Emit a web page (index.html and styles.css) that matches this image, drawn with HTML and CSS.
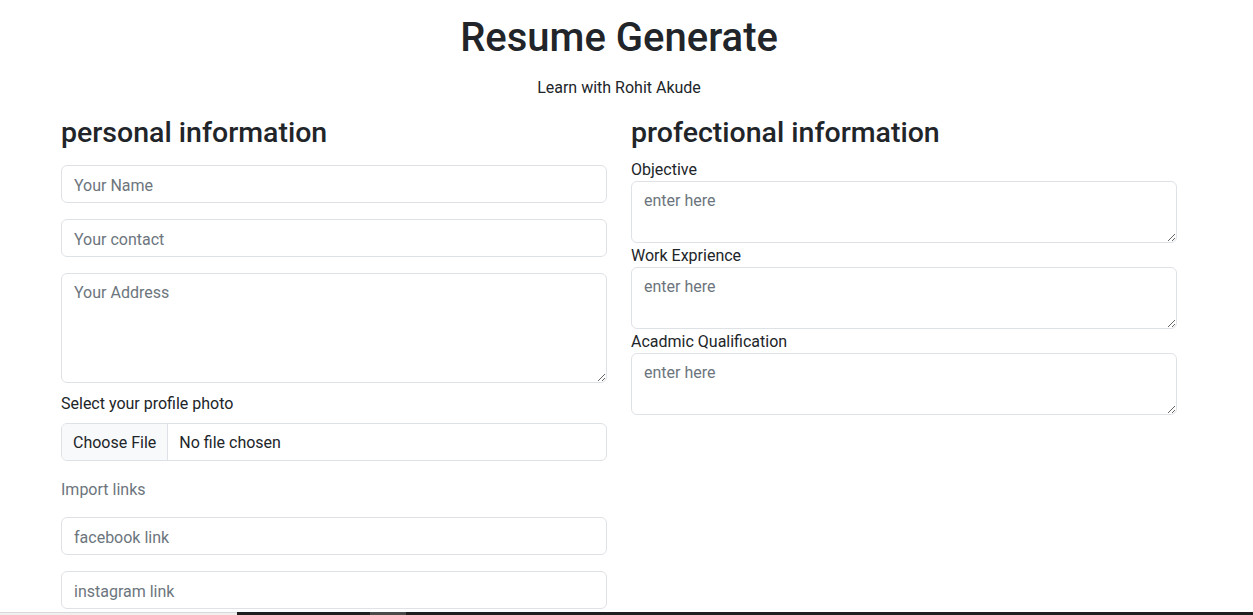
FILE: index.html
```html
<!DOCTYPE html>
<html lang="en">
<head>
<meta charset="utf-8">
<title>Resume Generate</title>
<link rel="stylesheet" href="styles.css">
</head>
<body>
<div class="container">
  <header class="header">
    <h1 class="title">Resume Generate</h1>
    <p class="subtitle">Learn with Rohit Akude</p>
  </header>
  <div class="row">
    <div class="col">
      <h3 class="section-title">personal information</h3>
      <div class="field first">
        <input class="form-control" type="text" placeholder="Your Name">
      </div>
      <div class="field">
        <input class="form-control" type="text" placeholder="Your contact">
      </div>
      <div class="field tight">
        <textarea class="form-control address" placeholder="Your Address"></textarea>
      </div>
      <label class="form-label">Select your profile photo</label>
      <div class="field">
        <input class="form-control file" type="file">
      </div>
      <p class="muted">Import links</p>
      <div class="field">
        <input class="form-control" type="text" placeholder="facebook link">
      </div>
      <div class="field">
        <input class="form-control" type="text" placeholder="instagram link">
      </div>
    </div>
    <div class="col">
      <h3 class="section-title">profectional information</h3>
      <label class="plain-label">Objective</label>
      <textarea class="form-control short" placeholder="enter here"></textarea>
      <label class="plain-label">Work Exprience</label>
      <textarea class="form-control short" placeholder="enter here"></textarea>
      <label class="plain-label">Acadmic Qualification</label>
      <textarea class="form-control short" placeholder="enter here"></textarea>
    </div>
  </div>
</div>
<div class="taskbar">
  <span class="tb-light"></span>
  <span class="tb-dark"></span>
  <span class="tb-mid"></span>
  <span class="tb-dark grow"></span>
</div>
</body>
</html>
```
FILE: styles.css
```css
* { box-sizing: border-box; }

html, body {
  margin: 0;
  background: #fff;
}

body {
  padding-right: 15px;
  font-family: Roboto, "Liberation Sans", sans-serif;
  font-size: 16px;
  line-height: 1.5;
  color: #212529;
  overflow: hidden;
}

.container {
  max-width: 1140px;
  margin: 0 auto;
  padding: 0 12px;
}

.header {
  padding-top: 14px;
  text-align: center;
}

.title {
  margin: 0 0 14px;
  font-size: 40px;
  font-weight: 500;
  line-height: 1.2;
}

.subtitle {
  margin: 0 0 16px;
}

.row {
  display: grid;
  grid-template-columns: 1fr 1fr;
  column-gap: 24px;
}

.col {
  display: flex;
  flex-direction: column;
}

.section-title {
  margin: 0 0 6.5px;
  font-size: 28.5px;
  font-weight: 500;
  line-height: 1.2;
}

.field {
  margin-bottom: 16px;
}

.field.first {
  margin-top: 8.5px;
}

.field.tight {
  margin-bottom: 8px;
}

.form-control {
  display: block;
  width: 100%;
  height: 38px;
  padding: 7px 12px 5px;
  font-family: inherit;
  font-size: 16px;
  line-height: 24px;
  color: #212529;
  background: #fff;
  border: 1px solid #dee2e6;
  border-radius: 6px;
  outline: none;
}

.form-control::placeholder {
  color: #6c757d;
  opacity: 1;
}

textarea.form-control {
  resize: vertical;
}

.address {
  height: 110px;
}

.short {
  height: 62px;
}

.file {
  padding: 0 12px 0 0;
  overflow: hidden;
}

.file::file-selector-button {
  height: 36px;
  margin: 0 11px 0 0;
  padding: 1px 11px 0;
  font-family: inherit;
  font-size: 16px;
  color: #212529;
  background: #f8f9fa;
  border: 0;
  border-right: 1px solid #dee2e6;
  border-radius: 0;
}

.form-label {
  display: block;
  padding-top: 1px;
  margin-bottom: 7px;
}

.plain-label {
  display: block;
  height: 24px;
  padding-top: 1px;
}

.muted {
  margin: 0 0 15px;
  padding-top: 1px;
  color: #6c757d;
}

.taskbar {
  position: fixed;
  left: 0;
  right: 0;
  bottom: 0;
  height: 3px;
  display: flex;
}

.taskbar span {
  display: block;
  height: 100%;
}

.tb-light {
  width: 237px;
  background: #f0f0f0;
  border-top: 1px solid #d9d9d9;
}

.tb-dark {
  width: 133px;
  background: #1f1f1f;
}

.tb-mid {
  width: 36px;
  background: #4a4a4a;
}

.tb-dark.grow {
  flex: 1;
}
```
